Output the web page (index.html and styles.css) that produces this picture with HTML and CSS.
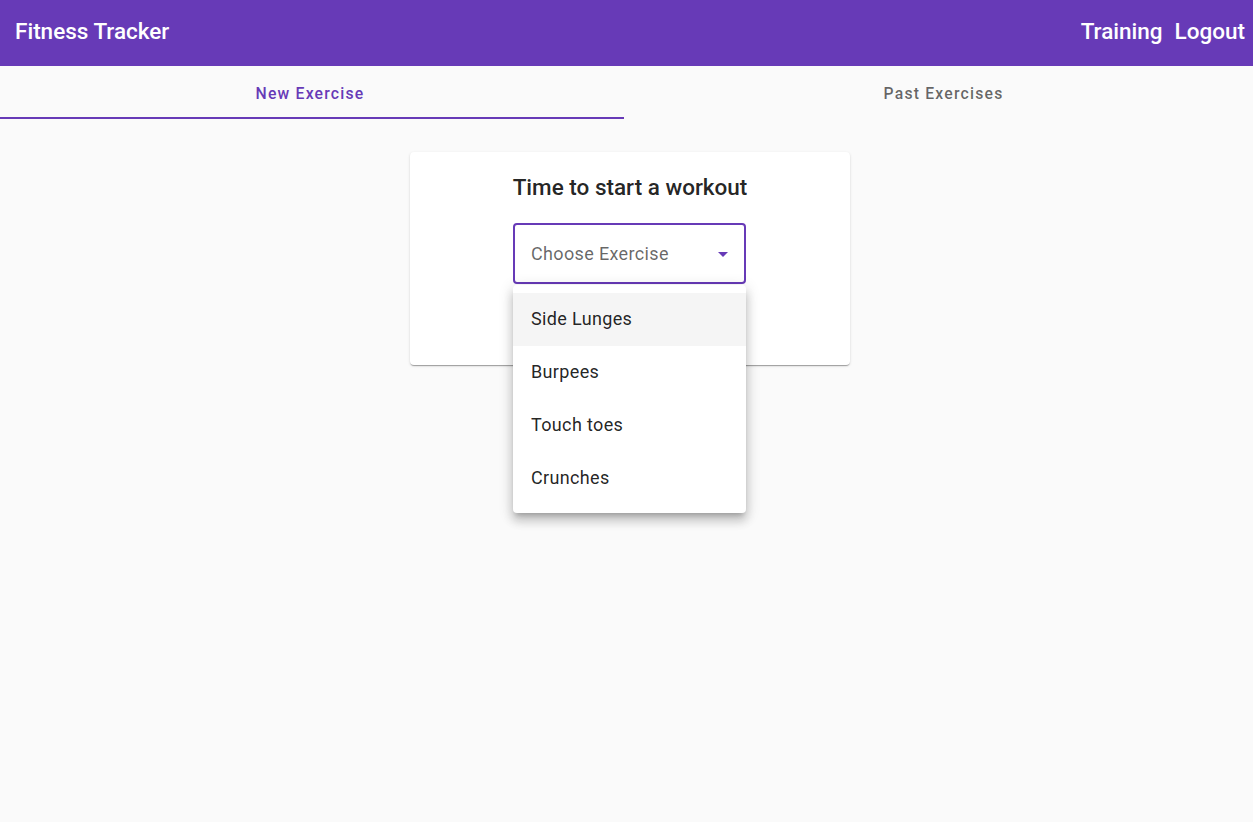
FILE: index.html
```html
<!DOCTYPE html>
<html>
<head>
<meta charset="utf-8">
<link rel="stylesheet" href="styles.css">
</head>
<body>
<header class="toolbar">
  <span class="brand">Fitness Tracker</span>
  <nav class="nav">
    <a class="nav-link">Training</a>
    <a class="nav-link">Logout</a>
  </nav>
</header>
<div class="tabs">
  <div class="tab tab-active"><span>New Exercise</span></div>
  <div class="tab tab-second"><span>Past Exercises</span></div>
</div>
<main class="content">
  <section class="card">
    <h1 class="card-title">Time to start a workout</h1>
    <div class="select-wrap">
      <div class="select">
        <span class="placeholder">Choose Exercise</span>
        <span class="arrow"></span>
      </div>
      <ul class="panel">
        <li class="option option-active">Side Lunges</li>
        <li class="option">Burpees</li>
        <li class="option">Touch toes</li>
        <li class="option">Crunches</li>
      </ul>
    </div>
  </section>
</main>
</body>
</html>
```

FILE: styles.css
```css
* { box-sizing: border-box; }
html, body { margin: 0; padding: 0; }
body {
  background: #fafafa;
  font-family: Roboto, "Liberation Sans", Arial, sans-serif;
  color: rgba(0,0,0,.87);
  min-height: 822px;
}
.toolbar {
  height: 66px;
  background: #673ab7;
  color: #fff;
  display: flex;
  align-items: center;
  justify-content: space-between;
  padding: 0 8px 4px 15px;
  font-size: 22.5px;
  font-weight: 500;
}
.nav { display: flex; gap: 12px; }
.nav-link { color: #fff; cursor: pointer; }
.tabs {
  display: flex;
  height: 53px;
}
.tab {
  display: flex;
  align-items: center;
  justify-content: center;
  font-size: 15.75px;
  font-weight: 500;
  letter-spacing: 1.2px;
  color: rgba(0,0,0,.6);
  padding-top: 3px;
}
.tab-active {
  width: 624px;
  padding-right: 4px;
  color: #673ab7;
  border-bottom: 2px solid #673ab7;
}
.tab-second {
  width: 629px;
  padding-left: 10px;
  padding-bottom: 2px;
}
.content {
  display: flex;
  justify-content: center;
  padding: 33px 0 0 7px;
}
.card {
  width: 440px;
  height: 213px;
  background: #fff;
  border-radius: 4px;
  box-shadow: 0 2px 1px -1px rgba(0,0,0,.2), 0 1px 1px 0 rgba(0,0,0,.14), 0 1px 3px 0 rgba(0,0,0,.12);
  padding: 19px 16px 0;
  display: flex;
  flex-direction: column;
  align-items: center;
}
.card-title {
  margin: 0;
  font-size: 22.5px;
  line-height: 32px;
  font-weight: 500;
  color: rgba(0,0,0,.87);
}
.select-wrap {
  position: relative;
  margin: 20px 1px 0 0;
  width: 233px;
}
.select {
  height: 61px;
  border: 2px solid #673ab7;
  border-radius: 4px;
  display: flex;
  align-items: center;
  justify-content: space-between;
  padding: 0 16px 0 16px;
}
.placeholder {
  font-size: 18px;
  letter-spacing: 0.35px;
  color: rgba(0,0,0,.6);
}
.arrow {
  width: 0;
  height: 0;
  border-left: 5.5px solid transparent;
  border-right: 5.5px solid transparent;
  border-top: 5px solid #673ab7;
  margin-top: 1px;
}
.panel {
  position: absolute;
  top: 62px;
  left: 0;
  width: 233px;
  margin: 0;
  padding: 8px 0;
  list-style: none;
  background: #fff;
  border-radius: 4px;
  box-shadow: 0 5px 5px -3px rgba(0,0,0,.2), 0 8px 10px 1px rgba(0,0,0,.14), 0 3px 14px 2px rgba(0,0,0,.12);
  z-index: 10;
}
.option {
  height: 53px;
  display: flex;
  align-items: center;
  padding-left: 18px;
  padding-bottom: 3px;
  font-size: 18px;
  letter-spacing: 0.35px;
  color: rgba(0,0,0,.87);
}
.option-active { background: rgba(0,0,0,.04); }
```
